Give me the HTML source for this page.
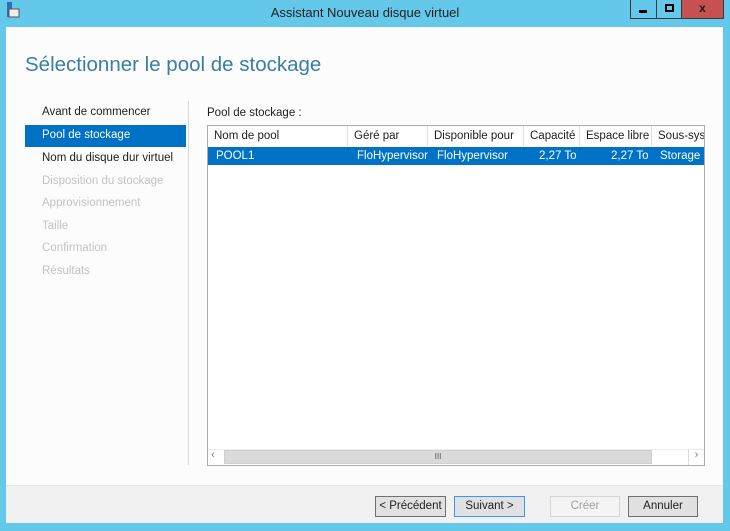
<!DOCTYPE html><html><head><meta charset="utf-8"><style>
*{margin:0;padding:0;box-sizing:border-box}
body{width:730px;height:531px;background:#63c8ea;font-family:"Liberation Sans",sans-serif;font-size:11.5px;position:relative;overflow:hidden;color:#1e1e1e}
.a{position:absolute}
.title{left:0;right:0;top:5px;text-align:center;font-size:13px;color:#222}
.cont{left:6px;top:27px;width:717px;height:496px;background:#fcfcfc}
.foot{left:6px;top:485px;width:717px;height:38px;background:#f1f1f1;border-top:1px solid #e6e6e6}
.h1{left:25px;top:53px;font-size:20.5px;color:#3a7fa3}
.nav{left:42px;font-size:11.5px}
.btn{height:21px;top:496px;border:1px solid #acacac;background:#e1e1e1;text-align:center;line-height:19px;font-size:11.5px}
.th{top:126px;height:20px;line-height:20px;border-right:1px solid #e0e0e0;padding-left:6px;white-space:nowrap;overflow:hidden}
.td{top:147px;height:18px;line-height:18px;color:#fff;white-space:nowrap;overflow:hidden}
</style></head><body>
<svg class="a" style="left:6px;top:2px" width="14" height="17"><rect x="1" y="0" width="5" height="15" fill="#2a70b8"/><rect x="3" y="7" width="10" height="8" fill="#eee" stroke="#555" stroke-width="1"/></svg>
<div class="a title">Assistant Nouveau disque virtuel</div>
<div class="a" style="left:630px;top:0;width:27px;height:19px;border:1px solid #3a3a3a;border-top:0;background:#63c8ea"><div class="a" style="left:8px;top:10px;width:8px;height:3px;background:#000"></div></div>
<div class="a" style="left:656px;top:0;width:26px;height:19px;border:1px solid #3a3a3a;border-top:0;background:#63c8ea"><div class="a" style="left:8px;top:4px;width:9px;height:8px;border:2px solid #000"></div></div>
<div class="a" style="left:681px;top:0;width:43px;height:19px;border:1px solid #3a3a3a;border-top:0;background:#c75050;text-align:center;font-weight:bold;font-size:12px;line-height:16px">x</div>
<div class="a cont"></div>
<div class="a h1">Sélectionner le pool de stockage</div>
<div class="a nav" style="top:106px">Avant de commencer</div>
<div class="a" style="left:25px;top:125px;width:161px;height:22px;background:#0072c6"></div>
<div class="a nav" style="top:129px;color:#fff">Pool de stockage</div>
<div class="a nav" style="top:152px">Nom du disque dur virtuel</div>
<div class="a nav" style="top:175px;color:#c3c3c3">Disposition du stockage</div>
<div class="a nav" style="top:197px;color:#c3c3c3">Approvisionnement</div>
<div class="a nav" style="top:220px;color:#c3c3c3">Taille</div>
<div class="a nav" style="top:242px;color:#c3c3c3">Confirmation</div>
<div class="a nav" style="top:265px;color:#c3c3c3">Résultats</div>
<div class="a" style="left:188px;top:101px;width:1px;height:364px;background:#d8d8d8"></div>
<div class="a" style="left:207px;top:107px">Pool de stockage :</div>
<div class="a" style="left:207px;top:125px;width:498px;height:341px;border:1px solid #ababab;background:#fff"></div>
<div class="a th" style="left:208px;width:140px">Nom de pool</div>
<div class="a th" style="left:348px;width:80px">Géré par</div>
<div class="a th" style="left:428px;width:96px">Disponible pour</div>
<div class="a th" style="left:524px;width:56px">Capacité</div>
<div class="a th" style="left:580px;width:72px">Espace libre</div>
<div class="a th" style="left:652px;width:52px;border:0">Sous-système</div>
<div class="a" style="left:208px;top:147px;width:496px;height:18px;background:#0072c6"></div>
<div class="a td" style="left:216px">POOL1</div>
<div class="a td" style="left:357px">FloHypervisor</div>
<div class="a td" style="left:437px">FloHypervisor</div>
<div class="a td" style="left:539px">2,27 To</div>
<div class="a td" style="left:611px">2,27 To</div>
<div class="a td" style="left:660px;width:44px">Storage Spaces</div>
<div class="a" style="left:208px;top:449px;width:496px;height:16px;background:#fff;border-top:1px solid #eee"></div>
<div class="a" style="left:224px;top:450px;width:428px;height:14px;background:#dadada;border:1px solid #cfcfcf;text-align:center;font-size:8px;line-height:12px;color:#555">III</div>
<div class="a" style="left:211px;top:449px;font-size:11px;color:#777">‹</div>
<div class="a" style="left:688px;top:449px;width:16px;height:16px;border-left:1px solid #ddd;font-size:11px;color:#777;text-align:center">›</div>
<div class="a foot"></div>
<div class="a btn" style="left:375px;width:71px;border-color:#707070">&lt; Précédent</div>
<div class="a btn" style="left:454px;width:71px;border-color:#3399ff">Suivant &gt;</div>
<div class="a btn" style="left:550px;width:70px;background:#f4f4f4;border-color:#d5d5d5;color:#a0a0a0">Créer</div>
<div class="a btn" style="left:628px;width:70px;border-color:#707070">Annuler</div>
</body></html>
